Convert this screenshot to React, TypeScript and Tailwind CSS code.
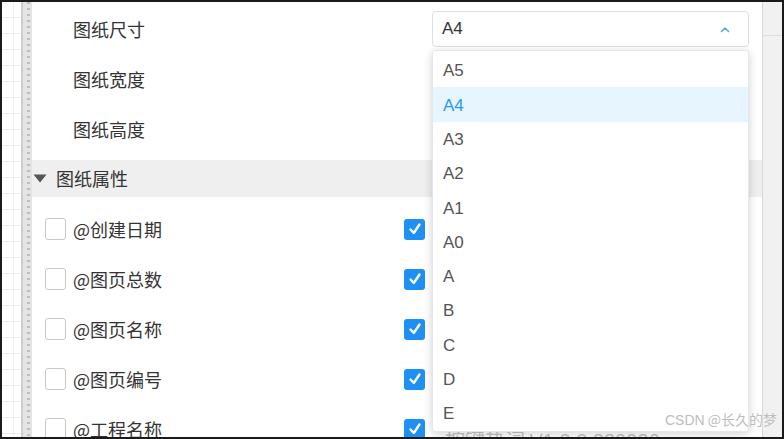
import React from 'react';

const sizes = ['A5', 'A4', 'A3', 'A2', 'A1', 'A0', 'A', 'B', 'C', 'D', 'E'];
const fields = ['@创建日期', '@图页总数', '@图页名称', '@图页编号', '@工程名称'];

const cjk = { fontFamily: '"Noto Sans CJK SC", "Liberation Sans", sans-serif' };
const latin = { fontFamily: '"Liberation Sans", Arial, sans-serif' };

function CheckedBox() {
  return (
    <span className="w-[21px] h-[21px] rounded-[3px] bg-[#1e8ff5] flex items-center justify-center shrink-0">
      <svg width="14" height="14" viewBox="0 0 14 14" fill="none">
        <path d="M2.5 7.5 L5.8 11 L11.5 2.5" stroke="white" strokeWidth="2.4" strokeLinecap="round" strokeLinejoin="round" />
      </svg>
    </span>
  );
}

export default function App() {
  return (
    <div className="w-[784px] h-[439px] border-2 border-[#1a1a1a] bg-white flex overflow-hidden relative" style={cjk}>
      {/* canvas grid */}
      <div className="w-[19px] h-full bg-white bg-[linear-gradient(#ececec_1px,transparent_1px),linear-gradient(90deg,#f0f0f0_1px,transparent_1px)] bg-[size:16px_16px] bg-[position:11px_15px]" />

      {/* splitter */}
      <div className="w-[11px] h-full border-l-2 border-[#cfcfcf] bg-[#e4e4e4] flex justify-center">
        <div className="w-[3px] h-full bg-[repeating-linear-gradient(#bdbdbd_0px,#bdbdbd_2px,transparent_2px,transparent_6px)] ml-[1px]" />
      </div>

      {/* property panel */}
      <div className="flex-1 relative text-[#333] text-[18px]">
        {[
          { label: '图纸尺寸', select: true },
          { label: '图纸宽度' },
          { label: '图纸高度' },
        ].map((r, i) => (
          <div key={r.label} className={`h-[50px] flex items-center ${i === 0 ? 'mt-[2px]' : ''}`}>
            <span className="w-[400px] pl-[41px]">{r.label}</span>
            {r.select && (
              <div className="relative w-[317px] z-20">
                <div className="h-[36px] border border-[#dcdfe6] rounded-[4px] flex items-center justify-between pl-[9px] pr-[18px] text-[17px] text-[#333]" style={latin}>
                  A4
                  <svg width="10" height="7" viewBox="0 0 10 7" fill="none">
                    <path d="M1.5 5.5 L5 2 L8.5 5.5" stroke="#5aa7e6" strokeWidth="1.6" strokeLinecap="round" strokeLinejoin="round" />
                  </svg>
                </div>
                {/* dropdown */}
                <div className="absolute left-0 top-[39px] w-full bg-white border border-[#e4e7ed] rounded-[3px] shadow-[0_2px_10px_rgba(0,0,0,0.18)] pt-[2px] pb-[1px]" style={latin}>
                  {sizes.map((s) => (
                    <div
                      key={s}
                      className={`h-[34.3px] flex items-center pl-[10px] pt-[2px] text-[17px] ${s === 'A4' ? 'bg-[#e6f5fe] text-[#2f95ec]' : 'text-[#555]'}`}
                    >
                      {s}
                    </div>
                  ))}
                </div>
              </div>
            )}
          </div>
        ))}

        {/* section header */}
        <div className="mt-[6px] h-[37px] bg-[#efefef] flex items-center">
          <svg width="14" height="9" viewBox="0 0 14 9" className="ml-[1px]">
            <path d="M0.5 0.5 H13.5 L7 8.5 Z" fill="#555" />
          </svg>
          <span className="ml-[9px]">图纸属性</span>
        </div>

        <div className="pt-[7px]">
          {fields.map((f) => (
            <div key={f} className="h-[50px] flex items-center">
              <span className="ml-[13px] w-[21px] h-[22px] border border-[#c8c8c8] rounded-[3px] bg-white shrink-0" />
              <span className="ml-[7px] w-[331px]">{f}</span>
              <CheckedBox />
            </div>
          ))}
        </div>

        <div className="absolute left-[413px] top-[423px] text-[20px] text-[#c4c4c4] whitespace-nowrap z-0">
          按键热词 <span style={latin}>V1.0.0 230926</span>
        </div>
      </div>

      {/* right strip */}
      <div className="w-[20px] h-full border-l border-[#d6d6d6] bg-[#f1f1f1] flex flex-col">
        <div className="h-[34px] border-b border-[#dddddd]" />
      </div>

      <div className="absolute right-[5px] bottom-[6px] text-[14px] text-[#bdbdbd] [text-shadow:0_0_2px_white] z-30 whitespace-nowrap">
        <span style={latin}>CSDN</span> @长久的梦
      </div>
    </div>
  );
}
